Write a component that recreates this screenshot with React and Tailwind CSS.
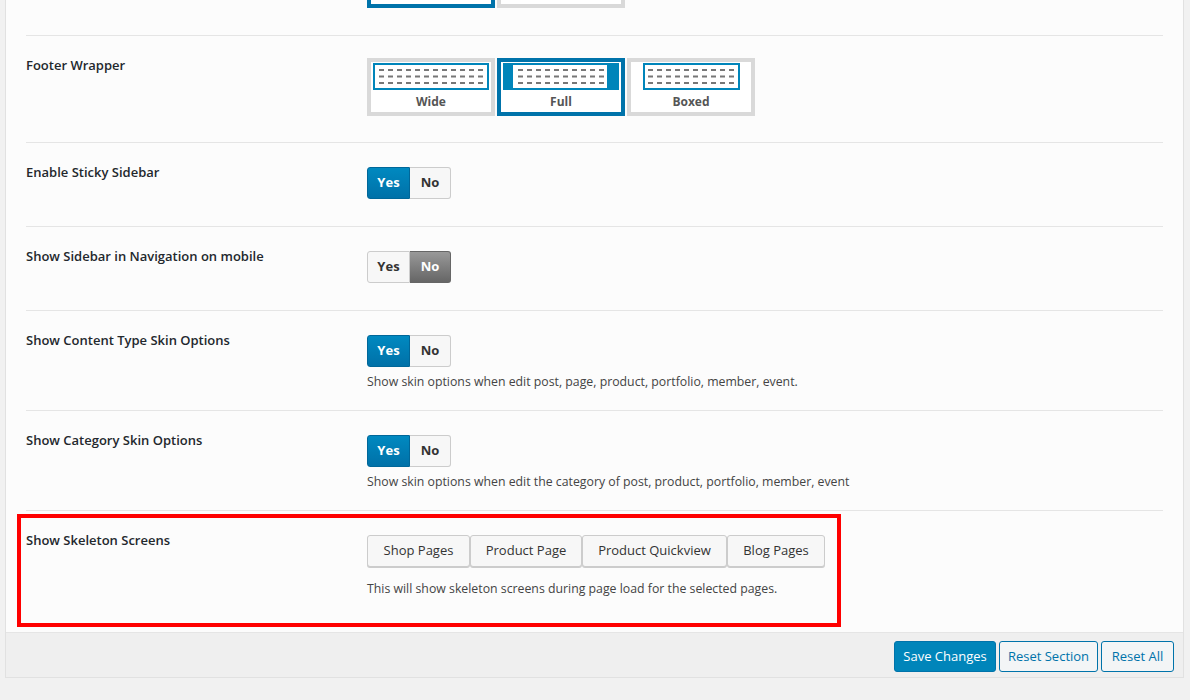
import React from 'react';

const font = { fontFamily: '"Open Sans", "Noto Sans", Arial, sans-serif' };

function LayoutPic({ type }) {
    if (type === 'full') {
        return (
            <svg width="116" height="27">
                <rect width="116" height="27" fill="#0085ba" />
                <rect x="10" y="2" width="94" height="23" fill="#fff" />
                {[7, 13.5, 20].map((y) => (
                    <line key={y} x1="15" x2="101" y1={y} y2={y} stroke="#777" strokeWidth="2" strokeDasharray="5 4" />
                ))}
            </svg>
        );
    }
    if (type === 'boxed') {
        return (
            <svg width="97" height="27">
                <rect x="1" y="1" width="95" height="25" fill="#fff" stroke="#0085ba" strokeWidth="2" />
                {[7, 13.5, 20].map((y) => (
                    <line key={y} x1="5" x2="91" y1={y} y2={y} stroke="#777" strokeWidth="2" strokeDasharray="5 4" />
                ))}
            </svg>
        );
    }
    return (
        <svg width="116" height="27">
            <rect x="1" y="1" width="114" height="25" fill="#fff" stroke="#0085ba" strokeWidth="2" />
            {[7, 13.5, 20].map((y) => (
                <line key={y} x1="6" x2="110" y1={y} y2={y} stroke="#777" strokeWidth="2" strokeDasharray="5 4" />
            ))}
        </svg>
    );
}

function LayoutOption({ type, label, active }) {
    return (
        <div className={'w-[128px] h-[58px] border-4 bg-white flex flex-col items-center ' + (active ? 'border-[#0073aa]' : 'border-[#d9d9d9]')}>
            <div className="mt-[1px] flex">
                <LayoutPic type={type} />
            </div>
            {label && <div className="mt-[4px] text-[12px] leading-[16px] font-bold text-[#555]">{label}</div>}
        </div>
    );
}

function YesNo({ value }) {
    const on = 'bg-gradient-to-b from-[#0089c0] to-[#0071a8] border-[#006799] text-white';
    const off = 'bg-[#f7f7f7] border-[#cccccc] text-[#333]';
    const grey = 'bg-gradient-to-b from-[#999] to-[#666] border-[#666] text-white';
    return (
        <div className="flex h-[32px] text-[13px] font-bold">
            <div className={'w-[43px] flex items-center justify-center border rounded-l-[3px] ' + (value === 'yes' ? on : off)}>Yes</div>
            <div className={'w-[41px] flex items-center justify-center border border-l-0 rounded-r-[3px] ' + (value === 'yes' ? off : grey)}>No</div>
        </div>
    );
}

function Row({ label, height, pad = 'pt-[24px]', last, children }) {
    return (
        <div className={'mx-5 grid grid-cols-[341px_1fr] ' + height + (last ? '' : ' border-b border-[#e5e5e5]')}>
            <div className="pt-[20px] text-[13px] leading-[18px] font-semibold text-[#23282d]">{label}</div>
            <div className={pad}>{children}</div>
        </div>
    );
}

export default function App() {
    const skeletonPages = [
        { name: 'Shop Pages', w: 'w-[103px]' },
        { name: 'Product Page', w: 'w-[112px]' },
        { name: 'Product Quickview', w: 'w-[145px]' },
        { name: 'Blog Pages', w: 'w-[98px]' },
    ];

    return (
        <div className="relative w-[1190px] h-[700px] bg-[#f1f1f1] overflow-hidden" style={font}>
            <div className="ml-[5px] w-[1179px] border-x border-b border-[#e1e1e1]">
                <div className="bg-[#fcfcfc] h-[632px]">
                    {/* bottom of the previous option, scrolled off */}
                    <div className="mx-5 h-[36px] border-b border-[#e5e5e5] overflow-hidden">
                        <div className="ml-[341px] -mt-[50px] flex gap-[2px]">
                            <LayoutOption type="wide" active />
                            <LayoutOption type="full" />
                        </div>
                    </div>

                    <Row label="Footer Wrapper" height="h-[107px]" pad="pt-[22px]">
                        <div className="flex gap-[2px]">
                            <LayoutOption type="wide" label="Wide" />
                            <LayoutOption type="full" label="Full" active />
                            <LayoutOption type="boxed" label="Boxed" />
                        </div>
                    </Row>

                    <Row label="Enable Sticky Sidebar" height="h-[84px]">
                        <YesNo value="yes" />
                    </Row>

                    <Row label="Show Sidebar in Navigation on mobile" height="h-[84px]">
                        <YesNo value="no" />
                    </Row>

                    <Row label="Show Content Type Skin Options" height="h-[100px]">
                        <YesNo value="yes" />
                        <p className="mt-[6px] text-[12.3px] leading-[18px] text-[#444]">
                            Show skin options when edit post, page, product, portfolio, member, event.
                        </p>
                    </Row>

                    <Row label="Show Category Skin Options" height="h-[100px]">
                        <YesNo value="yes" />
                        <p className="mt-[6px] text-[12.3px] leading-[18px] text-[#444]">
                            Show skin options when edit the category of post, product, portfolio, member, event
                        </p>
                    </Row>

                    <Row label="Show Skeleton Screens" height="h-[121px]" last>
                        <div className="flex">
                            {skeletonPages.map((p) => (
                                <button
                                    key={p.name}
                                    type="button"
                                    className={p.w + ' h-[32px] bg-[#f7f7f7] border border-[#cccccc] rounded-[3px] text-[13px] text-[#333] shadow-[0_1px_0_#ccc]'}
                                >
                                    {p.name}
                                </button>
                            ))}
                        </div>
                        <p className="mt-[13px] text-[12.3px] leading-[18px] text-[#444]">
                            This will show skeleton screens during page load for the selected pages.
                        </p>
                    </Row>
                </div>

                <div className="h-[45px] bg-[#efefef] border-t border-[#e5e5e5] flex justify-end items-start pt-[8px] pr-[9px] gap-[3px]">
                    <button type="button" className="w-[102px] h-[31px] rounded-[3px] bg-[#0085ba] border border-[#0073aa] text-white text-[13px]">
                        Save Changes
                    </button>
                    <button type="button" className="w-[99px] h-[31px] rounded-[3px] bg-[#f3f5f6] border border-[#0073aa] text-[#0073aa] text-[13px]">
                        Reset Section
                    </button>
                    <button type="button" className="w-[73px] h-[31px] rounded-[3px] bg-[#f3f5f6] border border-[#0073aa] text-[#0073aa] text-[13px]">
                        Reset All
                    </button>
                </div>
            </div>

            {/* highlight annotation */}
            <div className="absolute left-[17px] top-[514px] w-[824px] h-[113px] border-4 border-[#ff0000] pointer-events-none" />
        </div>
    );
}
